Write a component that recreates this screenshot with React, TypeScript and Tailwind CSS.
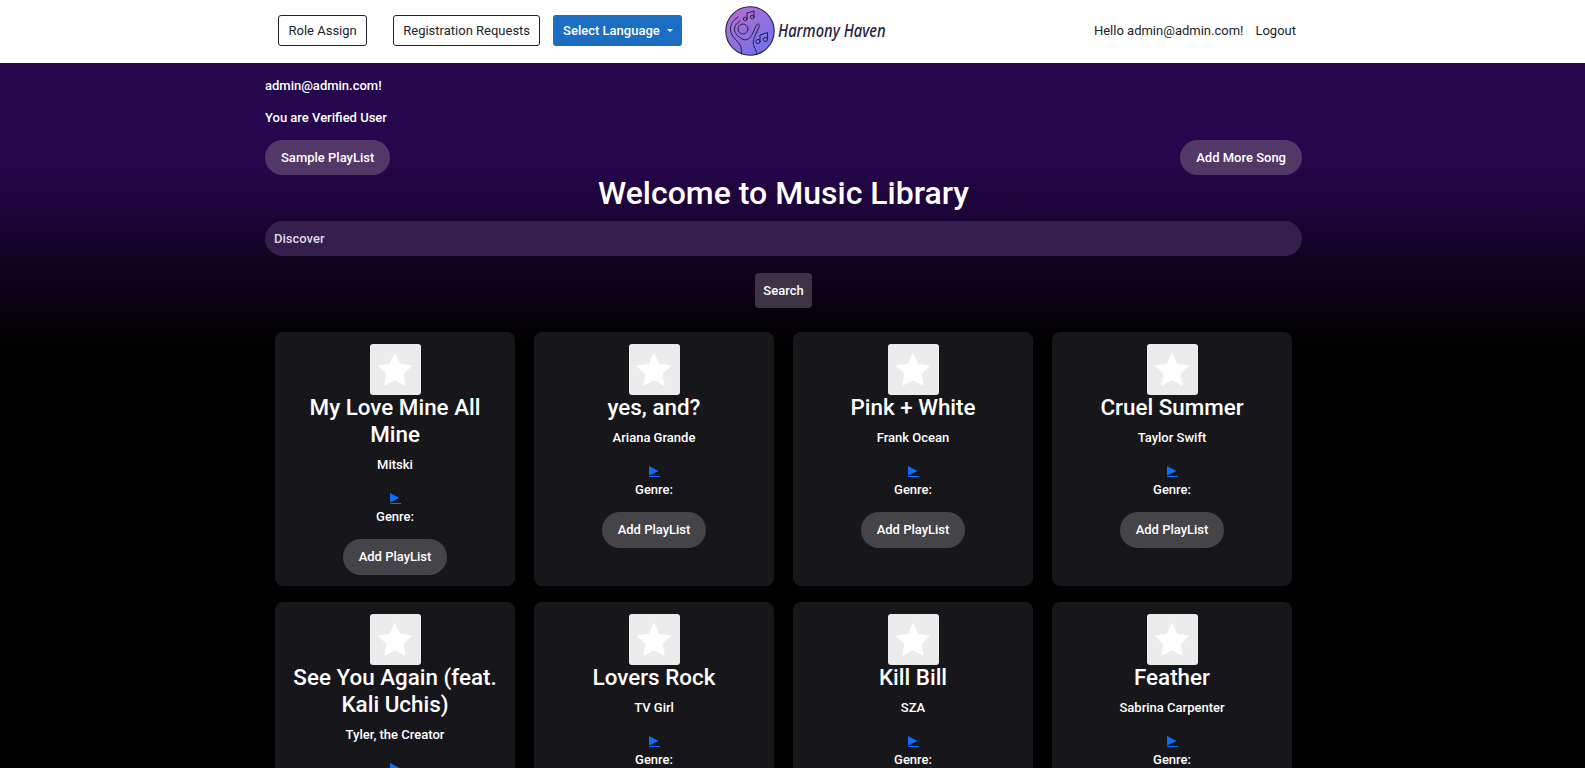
import React from 'react'

const songs = [
    { title: 'My Love Mine All Mine', artist: 'Mitski' },
    { title: 'yes, and?', artist: 'Ariana Grande' },
    { title: 'Pink + White', artist: 'Frank Ocean' },
    { title: 'Cruel Summer', artist: 'Taylor Swift' },
    { title: 'See You Again (feat. Kali Uchis)', artist: 'Tyler, the Creator' },
    { title: 'Lovers Rock', artist: 'TV Girl' },
    { title: 'Kill Bill', artist: 'SZA' },
    { title: 'Feather', artist: 'Sabrina Carpenter' },
]

function Logo() {
    return (
        <svg viewBox="0 0 50 50" className="h-[50px] w-[50px] shrink-0">
            <defs>
                <linearGradient id="logoFill" x1="0.1" y1="0" x2="0.8" y2="1">
                    <stop offset="0" stopColor="#bb6cd4" />
                    <stop offset="1" stopColor="#6d72ec" />
                </linearGradient>
            </defs>
            <circle cx="25" cy="25" r="24.2" fill="url(#logoFill)" stroke="#23233f" strokeWidth="1.1" />
            <g fill="none" stroke="#23233f" strokeWidth="1" strokeLinecap="round" strokeLinejoin="round">
                {/* head and arms */}
                <circle cx="18" cy="23" r="5" />
                <path d="M13 11c-5 3-8 8-7.500 13 .5 6 6 10 9 14 1.500 2 2 5 2 10" />
                <path d="M15 15c-3.500 2-5.500 5-5.500 8.500 0 4 3.500 7 7.500 9.500 3 1.500 5.500 1 7.500-1 3-3 4.500-8 7-13 1.500-2 4 0 2.500 2l-4 9c-2.500 5-2 9 0 12.500l2 5" />
                {/* top note */}
                <path d="M22 13v-6l7-2v6" />
                <circle cx="20.200" cy="13" r="1.800" />
                <circle cx="27.200" cy="11" r="1.800" />
                {/* lower note */}
                <path d="M35 35v-6l7.500-2.500v6" />
                <circle cx="33" cy="35.500" r="2.100" />
                <circle cx="40.500" cy="33.500" r="2.100" />
            </g>
        </svg>
    )
}

function SongCard({ title, artist }: { title: string; artist: string }) {
    return (
        <div className="flex h-full flex-col items-center rounded-[8px] bg-[#17161b] px-3 pt-3 pb-[11.5px] text-center text-white">
            <div className="flex h-[51px] w-[51px] items-center justify-center rounded-[3px] bg-[#ececec]">
                <svg viewBox="0 0 24 24" className="h-[36px] w-[36px]" fill="#ffffff">
                    <path d="M12 1.500l3.200 6.900 7.500.9-5.500 5.200 1.400 7.400L12 18.300l-6.600 3.600 1.400-7.400L1.300 9.300l7.500-.9z" stroke="#ffffff" strokeLinejoin="round" />
                </svg>
            </div>
            <h3 className="-mt-px mb-[7px] text-[22.4px] leading-[27px] font-medium">{title}</h3>
            <p className="mb-[18px] text-[13px] leading-[20px] font-medium">{artist}</p>
            <a className="block h-[11px] text-[#0d6efd]">
                <svg viewBox="0 0 11 11" className="h-[11px] w-[11px]" fill="#0d6efd">
                    <path d="M0 0l9.500 5L0 9.500z" />
                    <rect x="0" y="10" width="11" height="1" />
                </svg>
            </a>
            <p className="mt-[2.5px] mb-[12px] text-[13px] leading-[20px] font-medium">Genre:</p>
            <button className="h-[36px] rounded-full bg-[#454449] px-4 text-[13px] font-medium text-white">Add PlayList</button>
        </div>
    )
}

export default function App() {
    return (
        <div className="min-h-screen bg-black font-['Roboto',sans-serif]">
            <nav className="box-border flex h-[63px] items-center bg-white pr-[289px] pb-[2px] pl-[278px] text-[13px] text-[#212529]">
                <button className="h-[31px] rounded-[3px] border border-[#212529] px-[9.500px]">Role Assign</button>
                <button className="ml-[26px] h-[31px] rounded-[3px] border border-[#212529] px-[9px]">Registration Requests</button>
                <button className="ml-[13px] flex h-[31px] items-center rounded-[3px] bg-[#1b6ec2] pr-[9px] pl-[10px] font-medium text-white">
                    Select Language
                    <span className="ml-[7px] h-0 w-0 border-x-[3px] border-t-[3px] border-x-transparent border-t-white"></span>
                </button>
                <div className="ml-[43px] flex items-center">
                    <Logo />
                    <span className="ml-[3px] origin-left scale-x-[0.82] font-['Noto_Sans',sans-serif] text-[18px] font-medium text-[#23233f] italic">Harmony Haven</span>
                </div>
                <div className="ml-auto flex items-center gap-[12px]">
                    <span>Hello admin@admin.com!</span>
                    <span>Logout</span>
                </div>
            </nav>
            <main className="bg-[linear-gradient(180deg,#26064c_0px,#26064c_100px,#000000_280px)] pr-[18px] text-white">
                <div className="mx-auto w-[1037px] pt-[13px]">
                    <p className="text-[13px] leading-[20px] font-medium">admin@admin.com!</p>
                    <p className="mt-[12px] text-[13px] leading-[20px] font-medium">You are Verified User</p>
                    <div className="mt-[12px] flex justify-between">
                        <button className="h-[35px] rounded-full bg-[#513866] px-4 text-[13px] font-medium">Sample PlayList</button>
                        <button className="h-[35px] rounded-full bg-[#513866] px-[16px] text-[13px] font-medium">Add More Song</button>
                    </div>
                    <h1 className="-mt-px text-center text-[32px] leading-[38px] font-medium">Welcome to Music Library</h1>
                    <div className="mt-[9px] flex h-[35px] items-center rounded-full bg-[#35204d] px-[9px] text-[13px] font-medium text-[#dcd8e2]">Discover</div>
                    <div className="mt-[17px] flex justify-center">
                        <button className="h-[35px] rounded-[4px] bg-[#3d3344] px-2 text-[13px] font-medium">Search</button>
                    </div>
                    <div className="mt-[24px] grid grid-cols-4 gap-x-[19px] gap-y-[16px] px-[10px]">
                        {songs.map((song) => (
                            <SongCard key={song.title} title={song.title} artist={song.artist} />
                        ))}
                    </div>
                </div>
            </main>
        </div>
    )
}
